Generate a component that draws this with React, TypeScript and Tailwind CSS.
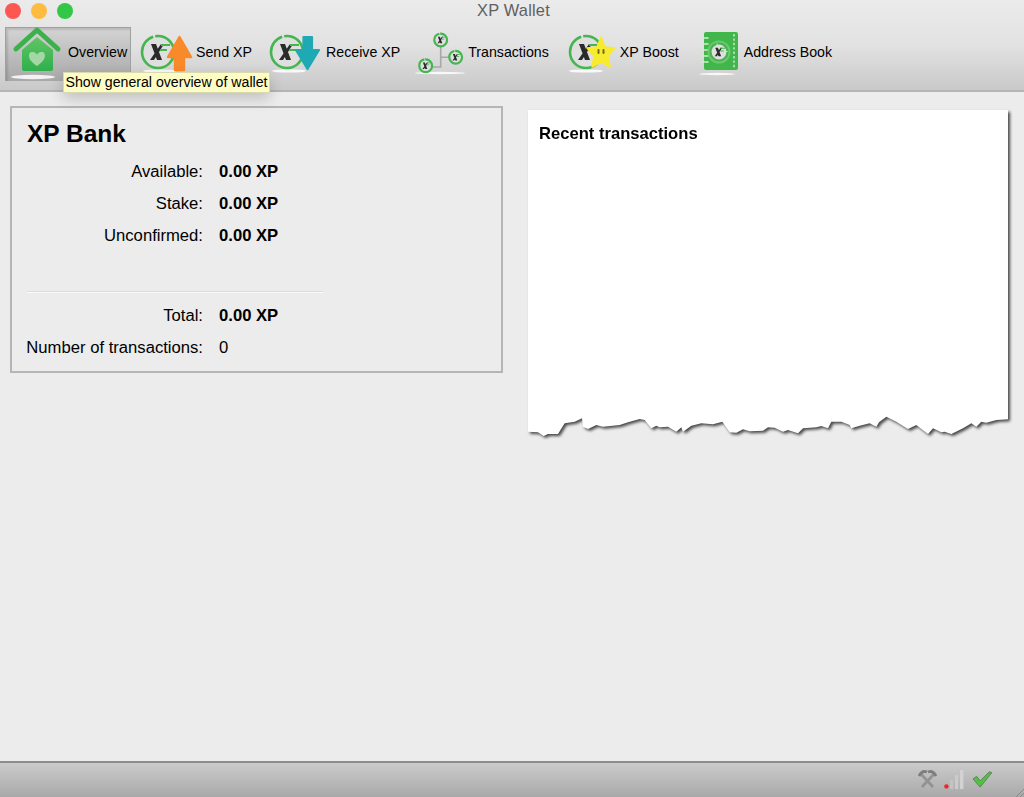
import type { ReactNode } from "react";

const font = "font-['Liberation_Sans',Arial,sans-serif]";

// torn bottom edge of the paper, traced from the picture
const tornEdge =
  "M25 125 L55 127 L72 138 L85 132 L115 132 L135 100 L165 95 L187 85 L190 110 L205 117 L230 105 L250 110 L300 105 L325 97 L360 87 L375 90 L395 115 L410 107 L420 112 L445 110 L470 125 L485 112 L490 125 L515 107 L545 100 L580 103 L608 95 L630 127 L650 128 L670 118 L690 124 L730 122 L745 112 L765 113 L790 125 L805 120 L835 130 L850 115 L890 112 L905 108 L925 115 L935 95 L965 95 L990 105 L995 115 L1020 107 L1050 100 L1070 110 L1078 97 L1100 80 L1130 95 L1165 117 L1190 105 L1225 132 L1240 115 L1265 127 L1275 125 L1295 132 L1330 115 L1355 100 L1370 110 L1385 95 L1400 98 L1430 90 L1465 88 L1465 0 L25 0 Z";

function Coin({ cx = 18, cy = 22, r = 16 }: { cx?: number; cy?: number; r?: number }) {
  const k = r / 16;
  const sw = Math.max(2.2, 2.6 * k);
  return (
    <g>
      <circle cx={cx} cy={cy} r={r} fill="#dfdfdf" stroke="#45b550" strokeWidth={sw} strokeDasharray={`${70 * k} ${2 * k} ${26 * k} ${2 * k}`} />
      <path
        d={`M${cx - 7 * k} ${cy - 8 * k} L${cx - 2 * k} ${cy - 8 * k} L${cx + 4 * k} ${cy + 8 * k} L${cx - 1 * k} ${cy + 8 * k} Z M${cx + 3 * k} ${cy - 8 * k} L${cx + 6 * k} ${cy - 8 * k} L${cx - 4 * k} ${cy + 8 * k} L${cx - 8 * k} ${cy + 8 * k} Z`}
        fill="#2a2a2a"
      />
      <path d={`M${cx + 3 * k} ${cy - 7 * k} H${cx + 12 * k} M${cx + 2 * k} ${cy - 2 * k} H${cx + 9 * k}`} stroke="#45b550" strokeWidth={2 * k} />
    </g>
  );
}

function HomeIcon() {
  return (
    <svg width="50" height="52" viewBox="0 0 50 52" className="overflow-visible shrink-0">
      <defs>
        <linearGradient id="homeFill" x1="0" y1="0" x2="0" y2="1">
          <stop offset="0" stopColor="#62c465" />
          <stop offset="1" stopColor="#2eb04c" />
        </linearGradient>
      </defs>
      <ellipse cx="23" cy="49" rx="22" ry="2.2" fill="#fff" opacity="0.85" />
      <path d="M12 22 L27 9 L43 22 V41 Q43 43 41 43 H14 Q12 43 12 41 Z" fill="url(#homeFill)" />
      <path d="M6 21 L27 2 L48 21" fill="none" stroke="#3bb14b" strokeWidth="5" strokeLinecap="round" strokeLinejoin="round" />
      <path d="M27 38 C16 31 18 23 23 24 C25 24 27 26 27 27 C27 26 29 24 31 24 C36 23 38 31 27 38 Z" fill="#a4d6a6" />
    </svg>
  );
}

function SendIcon() {
  return (
    <svg width="54" height="44" viewBox="0 0 54 44" className="overflow-visible shrink-0">
      <ellipse cx="20" cy="41" rx="17" ry="1.6" fill="#fff" opacity="0.85" />
      <Coin />
      <path d="M39.5 7 L51 27 H44 V40 H35 V27 H28 Z" fill="#f98a2b" stroke="#f98a2b" strokeWidth="2.4" strokeLinejoin="round" />
    </svg>
  );
}

function ReceiveIcon() {
  return (
    <svg width="54" height="44" viewBox="0 0 54 44" className="overflow-visible shrink-0">
      <ellipse cx="20" cy="41" rx="17" ry="1.6" fill="#fff" opacity="0.85" />
      <Coin />
      <path d="M34.5 7 H43 V20 H50 L38.5 39 L27 20 H34.5 Z" fill="#1fa9b4" stroke="#1fa9b4" strokeWidth="2.2" strokeLinejoin="round" />
    </svg>
  );
}

function TransactionsIcon() {
  return (
    <svg width="48" height="44" viewBox="0 0 48 44" className="overflow-visible shrink-0">
      <ellipse cx="23" cy="43" rx="25" ry="1.2" fill="#fff" opacity="0.85" />
      <path d="M23.7 14 V37 H12 M23.7 27.3 H36" stroke="#a8a8a8" strokeWidth="1.6" fill="none" />
      <Coin cx={23.7} cy={10} r={6.4} />
      <Coin cx={38.7} cy={27.3} r={6.4} />
      <Coin cx={8.7} cy={35.7} r={6.4} />
    </svg>
  );
}

function BoostIcon() {
  return (
    <svg width="50" height="44" viewBox="0 0 50 44" className="overflow-visible shrink-0">
      <ellipse cx="18" cy="41" rx="17" ry="1.6" fill="#fff" opacity="0.85" />
      <Coin cx={18} cy={22} />
      <path d="M33 7 L37 17 L47 18 L40 26 L42 37 L33 32 L24 37 L26 26 L19 18 L29 17 Z" fill="#f8ea2d" stroke="#f8ea2d" strokeLinejoin="round" strokeWidth="1.5" />
      <rect x="29.5" y="19" width="2" height="5" rx="1" fill="#6b6830" />
      <rect x="34.5" y="19" width="2" height="5" rx="1" fill="#6b6830" />
    </svg>
  );
}

function BookIcon() {
  return (
    <svg width="42" height="44" viewBox="0 0 42 44" className="overflow-visible shrink-0">
      <ellipse cx="17" cy="44" rx="18" ry="1.2" fill="#fff" opacity="0.85" />
      <rect x="4" y="2" width="34" height="38" rx="2" fill="#41b74b" />
      <path d="M2 8 H8 M2 14 H8 M2 20 H8 M2 26 H8 M2 32 H8" stroke="#cfeed0" strokeWidth="1.6" strokeLinecap="round" />
      <path d="M34 4 V38" stroke="#cbeecd" strokeWidth="1.4" strokeDasharray="2.4 2" />
      <circle cx="19" cy="22" r="11.5" fill="#6cc86f" />
      <Coin cx={19} cy={22} r={8.5} />
    </svg>
  );
}

function ToolItem({ icon, label, className }: { icon: ReactNode; label: string; className?: string }) {
  return (
    <div className={`flex items-center shrink-0 mt-[3px] ${className ?? ""}`}>
      {icon}
      <span className="text-[14.2px] text-black leading-none">{label}</span>
    </div>
  );
}

function Row({ label, value, bold = true }: { label: string; value: string; bold?: boolean }) {
  return (
    <div className="flex items-center h-[32px] text-[16.65px] text-black">
      <span className="w-[176px] flex justify-end shrink-0 whitespace-nowrap">{label}</span>
      <span className={`ml-[16px] ${bold ? "font-bold" : ""}`}>{value}</span>
    </div>
  );
}

export default function App() {
  return (
    <div className={`${font} w-[1024px] h-[797px] flex flex-col bg-[#ececec] overflow-hidden`}>
      {/* title bar + toolbar */}
      <div className="relative h-[92px] shrink-0 bg-gradient-to-b from-[#ebebeb] via-[#e2e2e2] to-[#c9c9c9] border-b-2 border-[#b4b4b4]">
        <div className="flex items-center h-[20px] pl-[5px] gap-[10px] pt-px">
          <div className="w-[16px] h-[16px] rounded-full bg-[#fc5753]" />
          <div className="w-[16px] h-[16px] rounded-full bg-[#fdbc40]" />
          <div className="w-[16px] h-[16px] rounded-full bg-[#33c748]" />
          <div className="flex-1 text-center text-[16.4px] text-[#606060] pr-[80px] tracking-[0.2px]">XP Wallet</div>
        </div>
        <div className="flex items-start h-[54px] mt-[7px] pl-[5px]">
          <div className="flex items-start shrink-0 w-[126px] h-[54px] pl-[4px] bg-gradient-to-b from-[#d4d4d4] to-[#a8a8a8] border-x border-t border-[#a0a0a0] shadow-[inset_2px_2px_2px_rgba(0,0,0,0.12)]">
            <HomeIcon />
            <span className="text-[14.2px] text-black leading-none ml-[8px] mt-[17px]">Overview</span>
          </div>
          <ToolItem className="ml-[9px] gap-[2px]" icon={<SendIcon />} label="Send XP" />
          <ToolItem className="ml-[17px] gap-[3px]" icon={<ReceiveIcon />} label="Receive XP" />
          <ToolItem className="ml-[17px] gap-[3px]" icon={<TransactionsIcon />} label="Transactions" />
          <ToolItem className="ml-[19px] gap-[2px]" icon={<BoostIcon />} label="XP Boost" />
          <ToolItem className="ml-[21px] gap-[2px]" icon={<BookIcon />} label="Address Book" />
        </div>
        {/* tooltip */}
        <div className="absolute left-[63px] top-[72px] h-[21px] w-[207px] z-10 flex items-center justify-center bg-[#fdfcc5] border border-[#d9d9b0] text-[14.15px] text-black whitespace-nowrap shadow-[0_6px_14px_rgba(0,0,0,0.18)]">
          Show general overview of wallet
        </div>
      </div>

      {/* main area */}
      <div className="flex-1 flex items-start pl-[10px] pt-[14px]">
        <div className="w-[493px] h-[267px] shrink-0 border-2 border-[#b5b5b5] pl-[15px] pt-[11px]">
          <div className="text-[24.5px] font-bold text-black leading-[30px]">XP Bank</div>
          <div className="mt-[7px]">
            <Row label="Available:" value="0.00 XP" />
            <Row label="Stake:" value="0.00 XP" />
            <Row label="Unconfirmed:" value="0.00 XP" />
          </div>
          <div className="w-[296px] h-[2px] mt-[39px] bg-[#fafafa] border-t border-[#dcdcdc]" />
          <div className="mt-[7px]">
            <Row label="Total:" value="0.00 XP" />
            <Row label="Number of transactions:" value="0" bold={false} />
          </div>
        </div>

        {/* one shadow over sheet and torn edge together */}
        <div className="ml-[25px] mt-[4px] w-[480px] shrink-0 drop-shadow-[2px_2px_1.5px_rgba(0,0,0,0.7)]">
          <div className="h-[281px] bg-white pl-[11px] pt-[12px]">
            <div className="text-[16.6px] font-bold text-black">Recent transactions</div>
          </div>
          <svg width="484" height="47" viewBox="25 0 1452 141" className="block -mt-px overflow-visible">
            <path d={tornEdge} fill="#fff" />
          </svg>
        </div>
      </div>

      {/* status bar */}
      <div className="relative h-[36px] shrink-0 flex items-center justify-end pr-[32px] pb-[3px] bg-gradient-to-b from-[#cbcbcb] to-[#a9a9a9] border-t-2 border-[#8c8c8c]">
        <svg width="19" height="18" viewBox="0 0 19 18" fill="none" className="opacity-80">
          <path d="M3 4 L15 17 M16 4 L4 17" stroke="#8a8a8a" strokeWidth="2.8" />
          <path d="M1 6 Q4 0 9 2 M18 6 Q15 0 10 2" stroke="#6e6e6e" strokeWidth="2.8" />
        </svg>
        <svg width="20" height="20" viewBox="0 0 20 20" className="ml-[7px]">
          <circle cx="2.4" cy="17.4" r="2.2" fill="#e8262b" />
          <rect x="6" y="11" width="3.2" height="9" fill="#c4c4c4" />
          <rect x="11" y="6" width="3.2" height="14" fill="#cbcbcb" />
          <rect x="16" y="1" width="3.4" height="19" fill="#d2d2d2" />
        </svg>
        <svg width="20" height="18" viewBox="0 0 22 20" className="ml-[8px]">
          <path d="M1 10 L5 7 L9 12 L19 2 L22 3 L9 19 Z" fill="#4cc43f" stroke="#5d7f58" strokeWidth="1" />
        </svg>
        {/* resize grip */}
        <svg width="8" height="8" viewBox="0 0 8 8" className="absolute right-0 bottom-0">
          <path d="M0 8 L8 0 M4 8 L8 4" stroke="#8a8a8a" strokeWidth="1" />
        </svg>
      </div>
    </div>
  );
}
